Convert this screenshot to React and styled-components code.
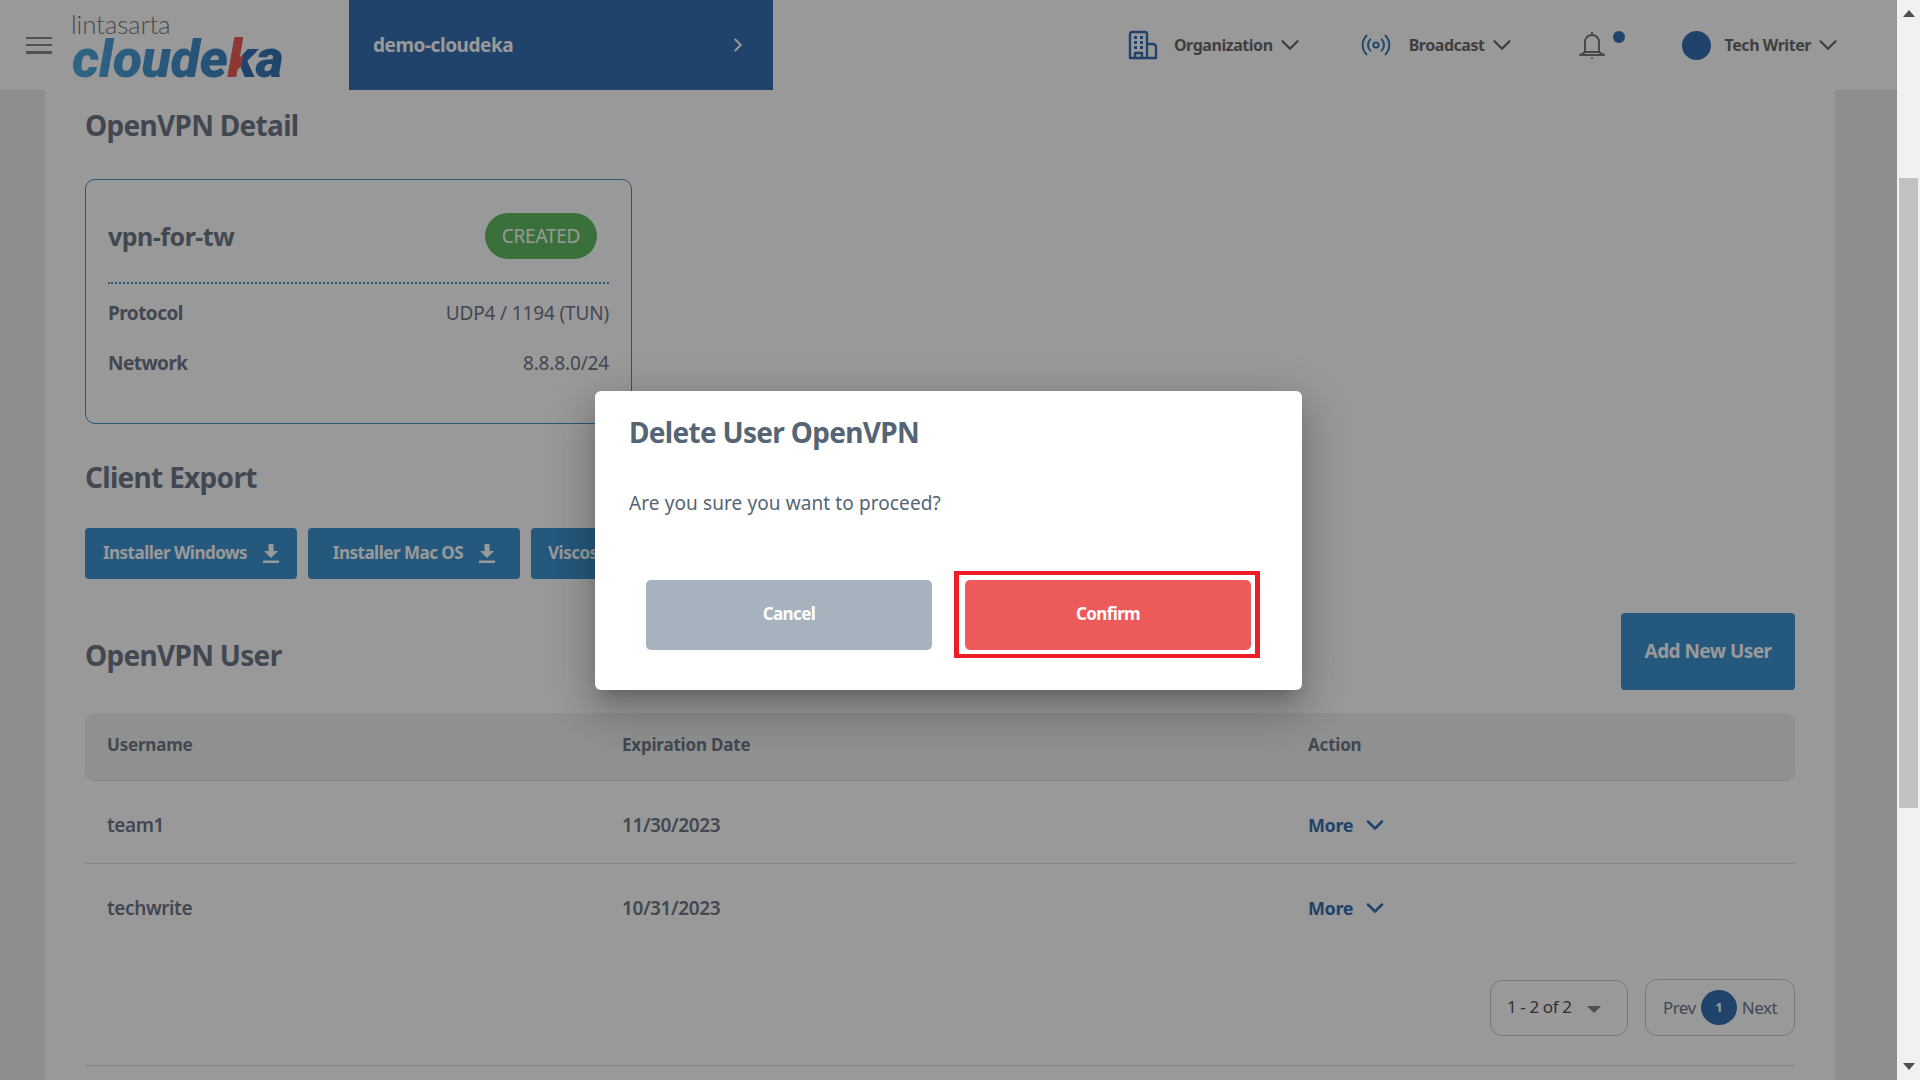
import React from 'react';
import styled, { createGlobalStyle } from 'styled-components';
import { ChevronDown, ChevronRight, Radio } from 'lucide-react';

const Global = createGlobalStyle`
  html, body { margin: 0; padding: 0; height: 100%; overflow: hidden; background: #fff; }
  * { box-sizing: border-box; }
  body { font-family: "Noto Sans", "Open Sans", sans-serif; }
`;
const Shell = styled.div`display: flex; width: 1920px; height: 1080px; overflow: hidden;`;
const Viewport = styled.div`position: relative; width: 1897px; height: 1080px; overflow: hidden; background: #ebebeb;`;
const Header = styled.header`display: flex; align-items: center; height: 90px; background: #fff; color: #4a4a4a;`;
const Burger = styled.div`
  display: flex; flex-direction: column; justify-content: space-between;
  width: 26px; height: 17px; margin-left: 26px;
  span { display: block; height: 2.5px; background: #7a7a7a; }
`;
const Logo = styled.div`display: flex; flex-direction: column; width: 277px; margin-left: 20px; height: 90px; padding-top: 11px;`;
const LogoTop = styled.span`font: 300 26px/27px Lato, sans-serif; color: #6d6d6d; height: 27px; letter-spacing: -0.2px; margin-left: -1px;`;
const LogoMain = styled.span`
  display: block; font: italic 900 54px/42px Roboto, sans-serif; letter-spacing: -0.5px;
  background: linear-gradient(90deg, #3d9fd9 0%, #2c7dc0 60%, #1f60a8 100%);
  width: 220px; -webkit-background-clip: text; background-clip: text; -webkit-text-fill-color: transparent;
`;
const LogoK = styled.span`
  background: linear-gradient(100deg, #f04a44 0 52%, #1f60a8 52% 100%);
  -webkit-background-clip: text; background-clip: text; -webkit-text-fill-color: transparent;
`;
const Project = styled.div`
  display: flex; align-items: center; justify-content: space-between;
  width: 424px; height: 90px; padding: 0 24px 0 24px; background: #1f60a8; color: #fff;
  font-size: 19px; font-weight: 700; letter-spacing: -0.45px;
`;
const Nav = styled.nav`display: flex; align-items: center; margin-left: auto; padding-right: 54px;`;
const NavItem = styled.div`
  display: flex; align-items: center; margin-left: ${p => p.$gap}px;
  font-size: 16px; font-weight: 700; letter-spacing: -0.45px; color: #5a5a5a;
  svg.blue { color: #1f60a8; }
`;
const NavLabel = styled.span`margin: 0 2px 0 ${p => p.$left}px; white-space: nowrap;`;
const BellWrap = styled.div`display: flex; align-items: flex-start; margin-left: 62px; height: 28px; gap: 8px;`;
const Dot = styled.span`display: block; width: 12px; height: 12px; border-radius: 50%; background: #1f60a8;`;
const Avatar = styled.span`display: block; width: 29px; height: 29px; border-radius: 50%; background: #1f60a8;`;

const Panel = styled.main`margin: 0 62px 0 45px; padding: 17px 40px 0; height: 990px; background: #fff; color: #5e6a7c;`;
const H2 = styled.h2`margin: ${p => p.$top || 0}px 0 0; font-size: 28px; line-height: 36px; font-weight: 700; letter-spacing: -0.7px;`;
const Card = styled.section`
  width: 547px; height: 245px; margin-top: 36px; padding: 33px 22px 0;
  border: 1px solid #2787cb; border-radius: 10px;
`;
const CardTop = styled.div`
  display: flex; justify-content: space-between; align-items: center; padding-bottom: 23px; padding-right: 12px;
`;
const CardTitle = styled.span`font-size: 25px; font-weight: 700; letter-spacing: -0.5px;`;
const Badge = styled.span`
  display: flex; align-items: center; justify-content: center; width: 112px; height: 46px;
  border-radius: 23px; background: #50b450; color: #fff; font-size: 19px; letter-spacing: -0.25px;
`;
const Dotted = styled.div`border-top: 2px dotted #2787cb;`;
const InfoRow = styled.div`
  display: flex; justify-content: space-between; align-items: center; height: 50px;
  font-size: 19px; letter-spacing: -0.15px; position: relative; top: 4px;
  b { font-weight: 700; letter-spacing: -0.55px; }
`;
const Buttons = styled.div`display: flex; gap: 11px; margin-top: 33px;`;
const Export = styled.button`
  display: flex; align-items: center; justify-content: ${p => p.$start ? 'flex-start' : 'center'}; gap: 16px;
  width: 212px; height: 51px; padding: 0 ${p => p.$start ? 17 : 6}px 2px; border: 0; border-radius: 4px; background: #2787cb; color: #fff;
  font: 700 17px "Noto Sans", sans-serif; letter-spacing: -0.5px; white-space: nowrap;
`;
const UserBar = styled.div`display: flex; justify-content: space-between; align-items: flex-end; margin-top: 34px;`;
const UserTitle = styled(H2)`margin-bottom: 17px;`;
const AddBtn = styled.button`
  width: 174px; height: 77px; border: 0; border-radius: 4px; background: #2787cb; color: #fff; padding-bottom: 2px;
  font: 700 19px "Noto Sans", sans-serif; letter-spacing: -0.55px;
`;
const Row = styled.div`
  display: grid; grid-template-columns: 515px 686px 1fr; align-items: center; padding-left: 22px;
  height: ${p => p.$h}px; font-size: 19px; font-weight: 600; letter-spacing: -0.4px;
`;
const HeadRow = styled(Row)`
  margin-top: 23px; background: #ebf0ed; border-radius: 10px; border-bottom: 1px solid #d4d8d6;
  font-size: 17px; font-weight: 700; letter-spacing: -0.2px; padding-bottom: 4px;
`;
const BodyRow = styled(Row)`border-bottom: 1px solid #d9dce0; padding-top: 5px;`;
const PlainRow = styled(Row)`padding-top: 5px;`;
const More = styled.span`
  display: flex; align-items: center; gap: 8px; color: #1f60a8; font-weight: 700; font-size: 18px; letter-spacing: -0.4px;
`;
const Pagination = styled.div`display: flex; justify-content: flex-end; gap: 17px; margin-top: 33px; height: 57px;`;
const Select = styled.div`
  display: flex; align-items: center; gap: 16px; width: 138px; height: 56px; margin-top: 1px; padding: 0 0 3px 16px;
  border: 1px solid #bcc4cf; border-radius: 12px; font-size: 17px; letter-spacing: -0.4px; color: #3d3d3d;
`;
const Caret = styled.span`
  width: 0; height: 0; border-left: 7px solid transparent; border-right: 7px solid transparent;
  border-top: 7px solid #777; margin-top: 5px;
`;
const Pager = styled.div`
  display: flex; align-items: center; justify-content: center; gap: 5px; width: 150px; padding-bottom: 1px;
  border: 1px solid #bcc4cf; border-radius: 12px; font-size: 17px; letter-spacing: -0.5px; color: #5e6a7c;
`;
const PageDot = styled.span`
  display: flex; align-items: center; justify-content: center; width: 36px; height: 35px; border-radius: 50%;
  background: #1f60a8; color: #fff; font-size: 13px; font-weight: 700;
`;
const Rule = styled.hr`margin: 29px 0 0; border: 0; border-top: 1px solid #cfd3d8;`;

const Overlay = styled.div`
  position: absolute; inset: 0; display: flex; align-items: center; justify-content: center;
  background: rgba(33, 33, 33, 0.46);
`;
const Modal = styled.div`
  width: 707px; height: 299px; padding-top: 23px; background: #fff; border-radius: 6px; color: #556575;
  box-shadow: 0 11px 15px -7px rgba(0,0,0,.2), 0 24px 38px 3px rgba(0,0,0,.14), 0 9px 46px 8px rgba(0,0,0,.12);
`;
const ModalTitle = styled.h3`margin: 0 0 0 34px; font-size: 28px; line-height: 36px; font-weight: 700; letter-spacing: -0.7px;`;
const ModalText = styled.p`margin: 39px 0 0 34px; font-size: 19px; line-height: 28px; letter-spacing: 0.1px;`;
const ModalActions = styled.div`display: flex; gap: 33px; margin-top: 63px; padding: 0 51px;`;
const ActionBtn = styled.button`
  width: 286px; height: 70px; padding: 0 0 3px; border: 0; border-radius: 5px; color: #fff; background: ${p => p.$bg};
  font: 700 17px "Noto Sans", sans-serif; letter-spacing: -0.6px;
`;
const HighlightWrap = styled.div`position: relative; display: flex;`;
const Highlight = styled.span`
  position: absolute; top: -9px; left: -11px; right: -9px; bottom: -8px;
  border-style: solid; border-color: #ee1c25; border-width: 4px 5px; pointer-events: none;
`;

const Scrollbar = styled.aside`
  display: flex; flex-direction: column; align-items: center; justify-content: space-between;
  width: 23px; height: 1080px; padding: 10px 0; background: #f1f1f1; position: relative;
`;
const Arrow = styled.span`
  width: 0; height: 0; border-left: 6.5px solid transparent; border-right: 6.5px solid transparent;
  ${p => p.$up ? 'border-bottom: 7px solid #505050;' : 'border-top: 7px solid #505050;'}
`;
const Thumb = styled.span`
  position: absolute; top: 178px; left: 2px; width: 19px; height: 630px; background: #c1c1c1;
`;

const BuildingIcon = () => (
  <svg width="30" height="30" viewBox="0 0 30 30" fill="none" stroke="#1f60a8" strokeWidth="2.4">
    <path d="M2 28V4a2 2 0 0 1 2-2h13a2 2 0 0 1 2 2v24zM19 14h6a3 3 0 0 1 3 3v11h-9M7 28v-5h7v5" strokeLinejoin="round" />
    <g fill="#1f60a8" stroke="none">
      <rect x="6" y="6" width="3" height="3" /><rect x="12" y="6" width="3" height="3" />
      <rect x="6" y="11" width="3" height="3" /><rect x="12" y="11" width="3" height="3" />
      <rect x="6" y="16" width="3" height="3" /><rect x="12" y="16" width="3" height="3" />
    </g>
  </svg>
);
const BellIcon = () => (
  <svg width="26" height="28" viewBox="0 0 26 28" fill="none" stroke="#6b6b6b" strokeWidth="2">
    <path d="M13 1v3M6 21V11a7 7 0 0 1 14 0v10M1 24c2-1 4-2 5-3h14c1 1 3 2 5 3z" strokeLinejoin="round" />
    <circle cx="13" cy="27" r="1" fill="#6b6b6b" stroke="none" />
  </svg>
);
const DownloadIcon = () => (
  <svg width="16" height="20" viewBox="0 0 16 20" fill="#fff">
    <path d="M5.5 1h5v7H15l-7 7-7-7h4.5zM0 17.5h16V20H0z" />
  </svg>
);

export default function App() {
  return (
    <Shell>
      <Global />
      <Viewport>
        <Header>
          <Burger><span /><span /><span /></Burger>
          <Logo>
            <LogoTop>lintasarta</LogoTop>
            <LogoMain>cloude<LogoK>k</LogoK>a</LogoMain>
          </Logo>
          <Project>demo-cloudeka <ChevronRight size={22} strokeWidth={2.2} /></Project>
          <Nav>
            <NavItem $gap={0}><BuildingIcon /><NavLabel $left={16}>Organization</NavLabel><ChevronDown size={30} strokeWidth={1.8} /></NavItem>
            <NavItem $gap={55}><Radio className="blue" size={32} strokeWidth={1.4} /><NavLabel $left={17}>Broadcast</NavLabel><ChevronDown size={30} strokeWidth={1.8} /></NavItem>
            <BellWrap><BellIcon /><Dot /></BellWrap>
            <NavItem $gap={57}><Avatar /><NavLabel $left={14}>Tech Writer</NavLabel><ChevronDown size={30} strokeWidth={1.8} /></NavItem>
          </Nav>
        </Header>
        <Panel>
          <H2>OpenVPN Detail</H2>
          <Card>
            <CardTop><CardTitle>vpn-for-tw</CardTitle><Badge>CREATED</Badge></CardTop>
            <Dotted />
            <InfoRow><b>Protocol</b><span>UDP4 / 1194 (TUN)</span></InfoRow>
            <InfoRow><b>Network</b><span>8.8.8.0/24</span></InfoRow>
          </Card>
          <H2 $top={35}>Client Export</H2>
          <Buttons>
            <Export>Installer Windows <DownloadIcon /></Export>
            <Export>Installer Mac OS <DownloadIcon /></Export>
            <Export $start>Viscosity <DownloadIcon /></Export>
          </Buttons>
          <UserBar><UserTitle>OpenVPN User</UserTitle><AddBtn>Add New User</AddBtn></UserBar>
          <HeadRow $h={68}><span>Username</span><span>Expiration Date</span><span>Action</span></HeadRow>
          <BodyRow $h={83}><span>team1</span><span>11/30/2023</span><More>More <ChevronDown size={28} strokeWidth={2.2} /></More></BodyRow>
          <PlainRow $h={82}><span>techwrite</span><span>10/31/2023</span><More>More <ChevronDown size={28} strokeWidth={2.2} /></More></PlainRow>
          <Pagination>
            <Select>1 - 2 of 2 <Caret /></Select>
            <Pager>Prev <PageDot>1</PageDot> Next</Pager>
          </Pagination>
          <Rule />
        </Panel>
        <Overlay>
          <Modal>
            <ModalTitle>Delete User OpenVPN</ModalTitle>
            <ModalText>Are you sure you want to proceed?</ModalText>
            <ModalActions>
              <ActionBtn $bg="#a6b3be">Cancel</ActionBtn>
              <HighlightWrap>
                <ActionBtn $bg="#ed5a5a">Confirm</ActionBtn>
                <Highlight />
              </HighlightWrap>
            </ModalActions>
          </Modal>
        </Overlay>
      </Viewport>
      <Scrollbar><Arrow $up /><Thumb /><Arrow /></Scrollbar>
    </Shell>
  );
}
